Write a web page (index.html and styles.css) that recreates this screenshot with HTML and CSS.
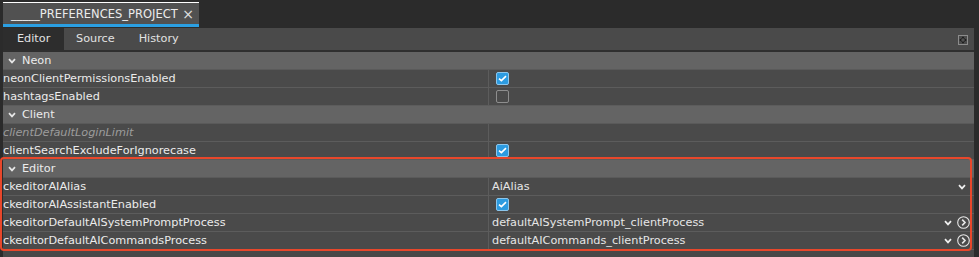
FILE: index.html
```html
<!DOCTYPE html>
<html>
<head>
<meta charset="utf-8">
<link rel="stylesheet" href="styles.css">
</head>
<body>
<div class="tabstrip">
  <div class="tab"><span class="tab-title">_____PREFERENCES_PROJECT</span><span class="tab-close">×</span></div>
</div>
<div class="panel">
  <div class="subtabs">
    <div class="subtab active">Editor</div>
    <div class="subtab">Source</div>
    <div class="subtab">History</div>
    <div class="subtabs-fill"></div>
    <svg class="max-icon" width="10" height="10" viewBox="0 0 10 10">
      <rect x="0.5" y="0.5" width="9" height="9" fill="#4a4a4a" stroke="#8c8c8c"/>
      <path d="M5 1.2 L6.4 3.6 L8.8 5 L6.4 6.4 L5 8.8 L3.6 6.4 L1.2 5 L3.6 3.6 Z" fill="#141414"/>
      <path d="M5 3 V7 M3 5 H7" stroke="#777" stroke-width="0.8"/>
    </svg>
  </div>
  <div class="grid">
    <div class="group-head"><svg class="chev" width="8" height="6" viewBox="0 0 8 6"><path d="M1 1.2 L4 4.4 L7 1.2" fill="none" stroke="#e6e6e6" stroke-width="1.7"/></svg><span>Neon</span></div>
    <div class="row"><div class="name">neonClientPermissionsEnabled</div><div class="value"><span class="cb on"><svg width="9" height="7" viewBox="0 0 9 7"><path d="M1 3.6 L3.4 5.6 L8 1.2" fill="none" stroke="#fff" stroke-width="1.6"/></svg></span></div></div>
    <div class="row"><div class="name">hashtagsEnabled</div><div class="value"><span class="cb"></span></div></div>
    <div class="group-head"><svg class="chev" width="8" height="6" viewBox="0 0 8 6"><path d="M1 1.2 L4 4.4 L7 1.2" fill="none" stroke="#e6e6e6" stroke-width="1.7"/></svg><span>Client</span></div>
    <div class="row"><div class="name muted">clientDefaultLoginLimit</div><div class="value"></div></div>
    <div class="row"><div class="name">clientSearchExcludeForIgnorecase</div><div class="value"><span class="cb on"><svg width="9" height="7" viewBox="0 0 9 7"><path d="M1 3.6 L3.4 5.6 L8 1.2" fill="none" stroke="#fff" stroke-width="1.6"/></svg></span></div></div>
    <div class="group-head"><svg class="chev" width="8" height="6" viewBox="0 0 8 6"><path d="M1 1.2 L4 4.4 L7 1.2" fill="none" stroke="#e6e6e6" stroke-width="1.7"/></svg><span>Editor</span></div>
    <div class="row"><div class="name">ckeditorAIAlias</div><div class="value"><span class="vtext">AiAlias</span><span class="actions one"><svg class="dd" width="8" height="6" viewBox="0 0 8 6"><path d="M1 1.2 L4 4.4 L7 1.2" fill="none" stroke="#f0f0f0" stroke-width="1.7"/></svg></span></div></div>
    <div class="row"><div class="name">ckeditorAIAssistantEnabled</div><div class="value"><span class="cb on"><svg width="9" height="7" viewBox="0 0 9 7"><path d="M1 3.6 L3.4 5.6 L8 1.2" fill="none" stroke="#fff" stroke-width="1.6"/></svg></span></div></div>
    <div class="row"><div class="name">ckeditorDefaultAISystemPromptProcess</div><div class="value"><span class="vtext">defaultAISystemPrompt_clientProcess</span><span class="actions"><svg class="dd" width="8" height="6" viewBox="0 0 8 6"><path d="M1 1.2 L4 4.4 L7 1.2" fill="none" stroke="#f0f0f0" stroke-width="1.7"/></svg><svg class="go" width="13" height="13" viewBox="0 0 13 13"><circle cx="6.5" cy="6.5" r="5.8" fill="none" stroke="#e8e8e8" stroke-width="1.1"/><path d="M5.2 3.6 L8 6.5 L5.2 9.4" fill="none" stroke="#e8e8e8" stroke-width="1.6"/></svg></span></div></div>
    <div class="row"><div class="name">ckeditorDefaultAICommandsProcess</div><div class="value"><span class="vtext">defaultAICommands_clientProcess</span><span class="actions"><svg class="dd" width="8" height="6" viewBox="0 0 8 6"><path d="M1 1.2 L4 4.4 L7 1.2" fill="none" stroke="#f0f0f0" stroke-width="1.7"/></svg><svg class="go" width="13" height="13" viewBox="0 0 13 13"><circle cx="6.5" cy="6.5" r="5.8" fill="none" stroke="#e8e8e8" stroke-width="1.1"/><path d="M5.2 3.6 L8 6.5 L5.2 9.4" fill="none" stroke="#e8e8e8" stroke-width="1.6"/></svg></span></div></div>
  </div>
</div>
<div class="highlight"></div>
</body>
</html>
```
FILE: styles.css
```css
html, body {
  margin: 0;
  padding: 0;
}
body {
  background: #2b2b2b;
  font-family: "DejaVu Sans", "Liberation Sans", sans-serif;
  font-size: 11.25px;
  color: #e6e6e6;
  width: 979px;
  height: 257px;
  overflow: hidden;
  position: relative;
}
.tabstrip {
  height: 28px;
  box-sizing: border-box;
  padding: 2px 0 0 3px;
}
.tab {
  width: 196px;
  height: 25px;
  box-sizing: border-box;
  border-top: 1px solid #ffffff;
  border-bottom: 3px solid #2b9fe2;
  background: #515151;
  display: flex;
  align-items: center;
  padding-left: 8px;
  color: #ececec;
  font-size: 11.5px;
}
.tab-title {
  flex: 1;
}
.tab-close {
  font-size: 14px;
  margin-right: 5px;
  color: #e0e0e0;
}
.panel {
  margin-left: 3px;
  width: 971px;
  height: 229px;
  background: #484848;
}
.subtabs {
  height: 22px;
  border-bottom: 2px solid #2f2f2f;
  background: #4a4a4a;
  display: flex;
  align-items: center;
}
.subtab {
  height: 22px;
  line-height: 22px;
  padding: 0 12px;
  color: #e2e2e2;
}
.subtab.active {
  background: #2d2d2d;
  width: 61px;
  box-sizing: border-box;
  padding: 0 0 0 14px;
}
.subtabs-fill {
  flex: 1;
}
.max-icon {
  margin-right: 6px;
  margin-top: 1px;
}
.grid {
  display: flex;
  flex-direction: column;
}
.group-head {
  height: 17px;
  border-bottom: 1px solid #5a5a5a;
  background: #646464;
  display: flex;
  align-items: center;
  padding-left: 5px;
  color: #ececec;
}
.chev {
  margin-right: 6px;
}
.row {
  height: 17px;
  border-bottom: 1px solid #5c5c5c;
  background: #4a4a4a;
  display: flex;
}
.name {
  width: 485px;
  flex: none;
  display: flex;
  align-items: center;
  padding-left: 0;
  border-right: 1px solid #5c5c5c;
  color: #ececec;
  white-space: nowrap;
}
.name.muted {
  font-style: italic;
  color: #9c9c9c;
}
.value {
  flex: 1;
  display: flex;
  align-items: center;
  padding-left: 3px;
  color: #e6e6e6;
  white-space: nowrap;
}
.vtext {
  flex: 1;
}
.cb {
  width: 13px;
  height: 13px;
  box-sizing: border-box;
  border: 1px solid #8e8e8e;
  border-radius: 2px;
  background: #4a4a4a;
  margin-left: 4px;
  display: flex;
  align-items: center;
  justify-content: center;
}
.cb.on {
  background: #2c9be0;
  border-color: #8cc6ec;
}
.actions {
  display: flex;
  align-items: center;
  margin-right: 4px;
}
.actions.one {
  margin-right: 8px;
}
.dd {
  margin-right: 5px;
}
.actions.one .dd {
  margin-right: 0;
}
.highlight {
  position: absolute;
  left: 0;
  top: 157px;
  width: 972px;
  height: 94px;
  box-sizing: border-box;
  border: 2.5px solid #e8472b;
  border-radius: 4px;
  pointer-events: none;
}
```
